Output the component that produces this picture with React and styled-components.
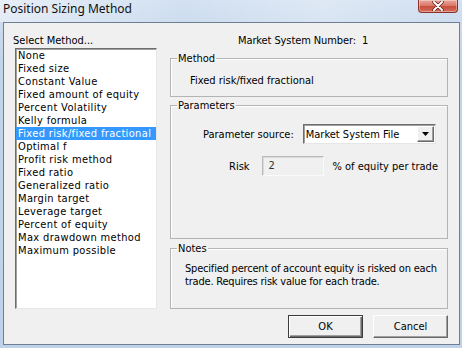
import React from 'react'
import styled, { createGlobalStyle } from 'styled-components'

const GlobalStyle = createGlobalStyle`
  html, body { margin: 0; padding: 0; background: #c4d5ea; }
  * { box-sizing: border-box; }
`

const methods = [
  'None',
  'Fixed size',
  'Constant Value',
  'Fixed amount of equity',
  'Percent Volatility',
  'Kelly formula',
  'Fixed risk/fixed fractional',
  'Optimal f',
  'Profit risk method',
  'Fixed ratio',
  'Generalized ratio',
  'Margin target',
  'Leverage target',
  'Percent of equity',
  'Max drawdown method',
  'Maximum possible',
]

const App = () => {
  const selected = 6
  return (
    <>
      <GlobalStyle />
      <Window>
        <TitleBar>
          <Title>Position Sizing Method</Title>
          <CloseButton>
            <svg width="14" height="10" viewBox="0 0 14 10">
              <path d="M3 1 L11 9 M11 1 L3 9" stroke="#5a1d18" strokeWidth="3.4" strokeLinecap="round" />
              <path d="M3 1 L11 9 M11 1 L3 9" stroke="#ffffff" strokeWidth="2" strokeLinecap="round" />
            </svg>
          </CloseButton>
        </TitleBar>
        <Body>
          <MainRow>
            <LeftColumn>
              <Caption>Select Method...</Caption>
              <ListBox>
                {methods.map((m, i) => (
                  <ListItem key={m} active={i === selected}>{m}</ListItem>
                ))}
              </ListBox>
            </LeftColumn>
            <RightColumn>
              <MarketLine>Market System Number:<Num>1</Num></MarketLine>
              <Group height={45}>
                <Legend>Method</Legend>
                <MethodName>Fixed risk/fixed fractional</MethodName>
              </Group>
              <Group height={140} gap={2}>
                <Legend>Parameters</Legend>
                <ParamRow indent={32} spacing={9} top={12}>
                  <span>Parameter source:</span>
                  <Select>
                    <SelectText>Market System File</SelectText>
                    <DropButton>
                      <svg width="7" height="4" viewBox="0 0 7 4">
                        <path d="M0 0 H7 L3.5 4 Z" fill="#000" />
                      </svg>
                    </DropButton>
                  </Select>
                </ParamRow>
                <ParamRow indent={58} spacing={12} top={12}>
                  <span>Risk</span>
                  <ValueBox>2</ValueBox>
                  <Unit>% of equity per trade</Unit>
                </ParamRow>
              </Group>
              <Group height={67} gap={3}>
                <Legend>Notes</Legend>
                <Notes>
                  Specified percent of account equity is risked on each<br />
                  trade. Requires risk value for each trade.
                </Notes>
              </Group>
            </RightColumn>
          </MainRow>
          <Footer>
            <DialogButton primary>OK</DialogButton>
            <DialogButton>Cancel</DialogButton>
          </Footer>
        </Body>
      </Window>
    </>
  )
}

export default App

const Window = styled.div`
width:462px;
height:348px;
display:flex;
flex-direction:column;
padding:0 2px 3px 3px;
background:linear-gradient(to bottom,#d3e1f1 0px,#c2d4ea 60px,#c0d2e9 100%);
font-family:"DejaVu Sans Condensed","Liberation Sans",sans-serif;
font-size:11px;
color:#000;
`

const TitleBar = styled.div`
height:22px;
margin:0 -2px 0 -3px;
padding-left:3px;
display:flex;
align-items:flex-start;
justify-content:space-between;
background:linear-gradient(to right,rgba(255,255,255,0.45),rgba(255,255,255,0) 40%,rgba(255,255,255,0.25) 70%,rgba(255,255,255,0));
`

const Title = styled.div`
font-family:"Noto Sans","Open Sans",sans-serif;
font-size:12px;
line-height:16px;
padding-top:1px;
color:#111;
`

const CloseButton = styled.div`
width:40px;
height:13px;
margin-right:4px;
display:flex;
align-items:center;
justify-content:center;
border:1px solid #8b3128;
border-top:none;
border-radius:0 0 4px 4px;
background:linear-gradient(to bottom,#eba89b 0%,#dc7a6c 45%,#c94e3d 55%,#d46f5c 100%);
box-shadow:inset 0 0 0 1px rgba(255,255,255,0.35);
`

const Body = styled.div`
flex:1;
display:flex;
flex-direction:column;
border:1px solid #6f7f93;
background:#f0f0f0;
padding:11px 11px 6px 9px;
`

const MainRow = styled.div`
display:flex;
gap:13px;
height:275px;
`

const LeftColumn = styled.div`
width:144px;
display:flex;
flex-direction:column;
`

const Caption = styled.div`
line-height:13px;
height:14px;
`

const ListBox = styled.div`
margin-left:2px;
width:142px;
flex:1;
background:#fff;
border:1px solid;
border-color:#6d6d6d #e6e6e6 #e6e6e6 #6d6d6d;
box-shadow:inset 1px 1px 0 #a0a0a0;
`

const ListItem = styled.div`
height:13px;
line-height:13px;
padding-left:2px;
letter-spacing:0.35px;
white-space:nowrap;
background:${p => (p.active ? '#3399ff' : 'transparent')};
color:${p => (p.active ? '#fff' : '#000')};
`

const RightColumn = styled.div`
width:278px;
display:flex;
flex-direction:column;
`

const MarketLine = styled.div`
line-height:13px;
height:13px;
padding-left:68px;
margin-bottom:5px;
letter-spacing:-0.1px;
`

const Num = styled.span`
margin-left:6px;
`

const Group = styled.fieldset`
margin:${p => p.gap || 0}px 0 0 0;
padding:0;
height:${p => p.height}px;
border:1px solid #b4b4b4;
box-shadow:1px 1px 0 #fff inset;
min-inline-size:0;
`

const Legend = styled.legend`
margin-left:6px;
padding:0 1px;
line-height:13px;
`

const MethodName = styled.div`
padding:9px 0 0 19px;
line-height:13px;
`

const ParamRow = styled.div`
display:flex;
align-items:center;
gap:${p => p.spacing}px;
padding-left:${p => p.indent}px;
margin-top:${p => p.top}px;
height:20px;
`

const Select = styled.div`
width:133px;
height:20px;
display:flex;
align-items:center;
justify-content:space-between;
background:#fff;
border:1px solid;
border-color:#6d6d6d #e6e6e6 #e6e6e6 #6d6d6d;
box-shadow:inset 1px 1px 0 #a0a0a0;
`

const SelectText = styled.span`
padding-left:2px;
`

const DropButton = styled.div`
width:17px;
height:16px;
margin-right:1px;
display:flex;
align-items:center;
justify-content:center;
background:#f0f0f0;
border:1px solid;
border-color:#fff #696969 #696969 #fff;
box-shadow:inset -1px -1px 0 #a0a0a0;
`

const ValueBox = styled.div`
width:62px;
height:20px;
padding:2px 0 0 6px;
line-height:13px;
color:#333;
background:#f0f0f0;
border:1px solid;
border-color:#b9b9b9 #fafafa #fafafa #b9b9b9;
box-shadow:inset 1px 1px 0 #dcdcdc;
`

const Unit = styled.span`
margin-left:-3px;
`

const Notes = styled.p`
margin:0;
padding:7px 0 0 14px;
line-height:13px;
letter-spacing:-0.2px;
white-space:nowrap;
`

const Footer = styled.div`
display:flex;
justify-content:flex-end;
gap:10px;
margin-top:6px;
`

const DialogButton = styled.button`
width:75px;
height:23px;
font:inherit;
color:#000;
background:#f0f0f0;
padding:0;
border:1px solid;
border-color:${p => (p.primary ? '#3c3c3c' : '#fff #696969 #696969 #fff')};
box-shadow:${p => (p.primary
    ? 'inset 1px 1px 0 #fff, inset -1px -1px 0 #696969, inset -2px -2px 0 #a0a0a0'
    : 'inset -1px -1px 0 #a0a0a0')};
`
